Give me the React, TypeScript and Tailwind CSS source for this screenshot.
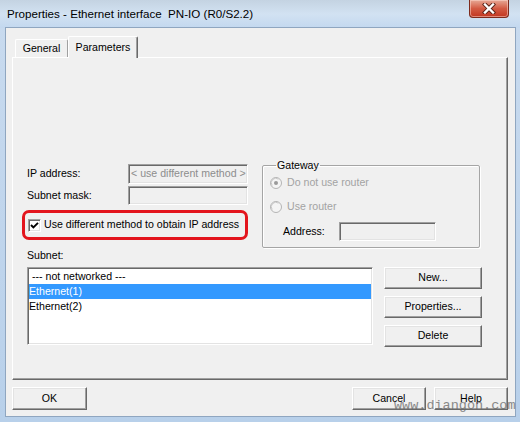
import React from "react";

const sunken =
  "border border-t-[#a0a0a0] border-l-[#a0a0a0] border-r-white border-b-white shadow-[inset_1px_1px_0_#696969,inset_-1px_-1px_0_#e3e3e3]";
const raised =
  "border border-t-white border-l-white border-r-[#696969] border-b-[#696969] shadow-[inset_-1px_-1px_0_#a0a0a0,inset_1px_1px_0_#e3e3e3]";

function Btn({ label, w = "w-[98px]", h = "h-[22px]" }: { label: string; w?: string; h?: string }) {
  return (
    <div className={`${w} ${h} ${raised} bg-[#f0f0f0] flex items-center justify-center text-black`}>
      {label}
    </div>
  );
}

function Radio({ checked }: { checked?: boolean }) {
  return (
    <svg width="12" height="12" viewBox="0 0 12 12" className="shrink-0">
      <circle cx="6" cy="6" r="5.5" fill="#f4f4f4" stroke="#b4b4b4" />
      <path d="M2.2 8.5 A4.5 4.5 0 0 1 8.5 2.2" fill="none" stroke="#c8c8c8" />
      {checked && <circle cx="6" cy="6" r="2" fill="#9a9a9a" />}
    </svg>
  );
}

export default function App() {
  return (
    <div
      className="w-[520px] h-[422px] flex flex-col bg-gradient-to-b from-[#c9dbef] to-[#b8d0ea] overflow-hidden relative"
      style={{ fontFamily: '"Liberation Sans", Arial, sans-serif' }}
    >
      {/* Title bar */}
      <div className="h-[28px] shrink-0 flex items-start justify-between bg-gradient-to-b from-[#c4d3e2] via-[#d2e2f2] to-[#c3d8ef]">
        <div className="pl-[7px] h-[27px] flex items-center text-[11.6px] text-black whitespace-pre">
          Properties - Ethernet interface  PN-IO (R0/S2.2)
        </div>
        <div className="mr-[11px] w-[40px] h-[18px] rounded-b-[4px] border border-t-0 border-[#7d2a1c] bg-gradient-to-b from-[#e6a896] via-[#d35a43] to-[#c1351f] shadow-[inset_0_0_0_1px_rgba(255,220,210,0.5)] flex items-center justify-center">
          <svg width="14" height="11" viewBox="0 0 14 11">
            <path d="M3 1.5 L11 9.5 M11 1.5 L3 9.5" stroke="#5b2318" strokeWidth="4.2" strokeLinecap="square" />
            <path d="M3 1.5 L11 9.5 M11 1.5 L3 9.5" stroke="#ffffff" strokeWidth="2.4" strokeLinecap="square" />
          </svg>
        </div>
      </div>

      {/* Client area */}
      <div
        className="flex-1 ml-[6px] mr-[5px] mb-[6px] bg-[#f0f0f0] shadow-[0_0_0_1px_#8fa6c0] flex flex-col pt-[8px] pl-[6px] pr-[7px] pb-[6px] text-[10.6px] text-black"
      >
        {/* Tabs */}
        <div className="h-[21px] flex items-end pl-[3px] shrink-0">
          <div className="w-[53px] h-[18px] border border-b-0 border-t-white border-l-white border-r-[#a0a0a0] rounded-t-[2px] flex items-center justify-center pt-[1px]">
            General
          </div>
          <div className="relative z-10 -mb-[1px] w-[70px] h-[22px] bg-[#f0f0f0] border border-b-0 border-t-white border-l-white border-r-[#696969] shadow-[inset_-1px_0_0_#a0a0a0] rounded-t-[2px] flex items-start justify-center pt-[3px]">
            Parameters
          </div>
        </div>

        {/* Tab page */}
        <div className="h-[323px] shrink-0 border border-t-white border-l-white border-r-[#696969] border-b-[#696969] shadow-[inset_-1px_-1px_0_#a0a0a0] pl-[14px] pt-[101px] flex flex-col">
          <div className="flex items-start">
            {/* Left column */}
            <div className="w-[221px] mt-[5px] flex flex-col">
              <div className="h-[20px] flex items-center">
                <div className="w-[101px]">IP address:</div>
                <div className={`w-[120px] h-[20px] ${sunken} bg-[#f0f0f0] text-[#8d8d8d] flex items-center pl-[2px] whitespace-pre`}>
                  {"< use different method >"}
                </div>
              </div>
              <div className="h-[19px] mt-[2px] flex items-center">
                <div className="w-[101px]">Subnet mask:</div>
                <div className={`w-[120px] h-[19px] ${sunken} bg-[#f0f0f0]`} />
              </div>
              <div className="mt-[5px] -ml-[5px] w-[226px] h-[30px] border-[3px] border-[#e3151d] rounded-[7px] flex items-center pl-[3px]">
                <div className={`w-[13px] h-[13px] ${sunken} bg-white flex items-center justify-center shrink-0`}>
                  <svg width="9" height="9" viewBox="0 0 9 9">
                    <path d="M1 4 L3.4 6.5 L8 1.8" fill="none" stroke="#000" strokeWidth="1.9" />
                  </svg>
                </div>
                <div className="ml-[3px] whitespace-nowrap">Use different method to obtain IP address</div>
              </div>
            </div>

            {/* Gateway group */}
            <fieldset className="ml-[14px] w-[218px] h-[89px] border border-[#a5a5a5] shadow-[inset_1px_1px_0_#ffffff,1px_1px_0_#ffffff] rounded-[2px] pl-[7px] pb-[6px]">
              <legend className="ml-[6px] px-[1px] leading-[13px]">Gateway</legend>
              <div className="mt-[3px] h-[16px] flex items-center text-[#a3a3a3]">
                <Radio checked />
                <span className="ml-[5px]">Do not use router</span>
              </div>
              <div className="mt-[8px] h-[16px] flex items-center text-[#a3a3a3]">
                <Radio />
                <span className="ml-[5px]">Use router</span>
              </div>
              <div className="mt-[7px] h-[19px] flex items-center pl-[13px]">
                <div className="w-[56px]">Address:</div>
                <div className={`w-[97px] h-[19px] ${sunken} bg-[#f0f0f0]`} />
              </div>
            </fieldset>
          </div>

          <div className="mt-[1px] leading-[13px]">Subnet:</div>

          <div className="mt-[5px] flex items-start">
            <div className={`w-[346px] h-[78px] ${sunken} bg-white p-[1px] leading-[15px]`}>
              <div className="h-[15px] pl-[3px] whitespace-pre">--- not networked ---</div>
              <div className="h-[15px] bg-[#3399ff] text-white">Ethernet(1)</div>
              <div className="h-[15px]">Ethernet(2)</div>
            </div>
            <div className="ml-[11px] flex flex-col gap-[7px]">
              <Btn label="New..." />
              <Btn label="Properties..." />
              <Btn label="Delete" />
            </div>
          </div>
        </div>

        {/* Bottom buttons */}
        <div className="mt-[7px] h-[23px] flex items-start shrink-0">
          <Btn label="OK" w="w-[75px]" h="h-[23px]" />
          <div className="flex-1" />
          <Btn label="Cancel" w="w-[74px]" h="h-[23px]" />
          <div className="ml-[8px]">
            <Btn label="Help" w="w-[74px]" h="h-[23px]" />
          </div>
        </div>
      </div>

      {/* Watermark overlay */}
      <div
        className="absolute left-[394px] top-[398px] text-[13.5px] leading-[16px] text-[#6f6f6f] opacity-80 pointer-events-none whitespace-nowrap"
        style={{ fontFamily: '"Liberation Mono", "Courier New", monospace' }}
      >
        www.diangon.com
      </div>
    </div>
  );
}
